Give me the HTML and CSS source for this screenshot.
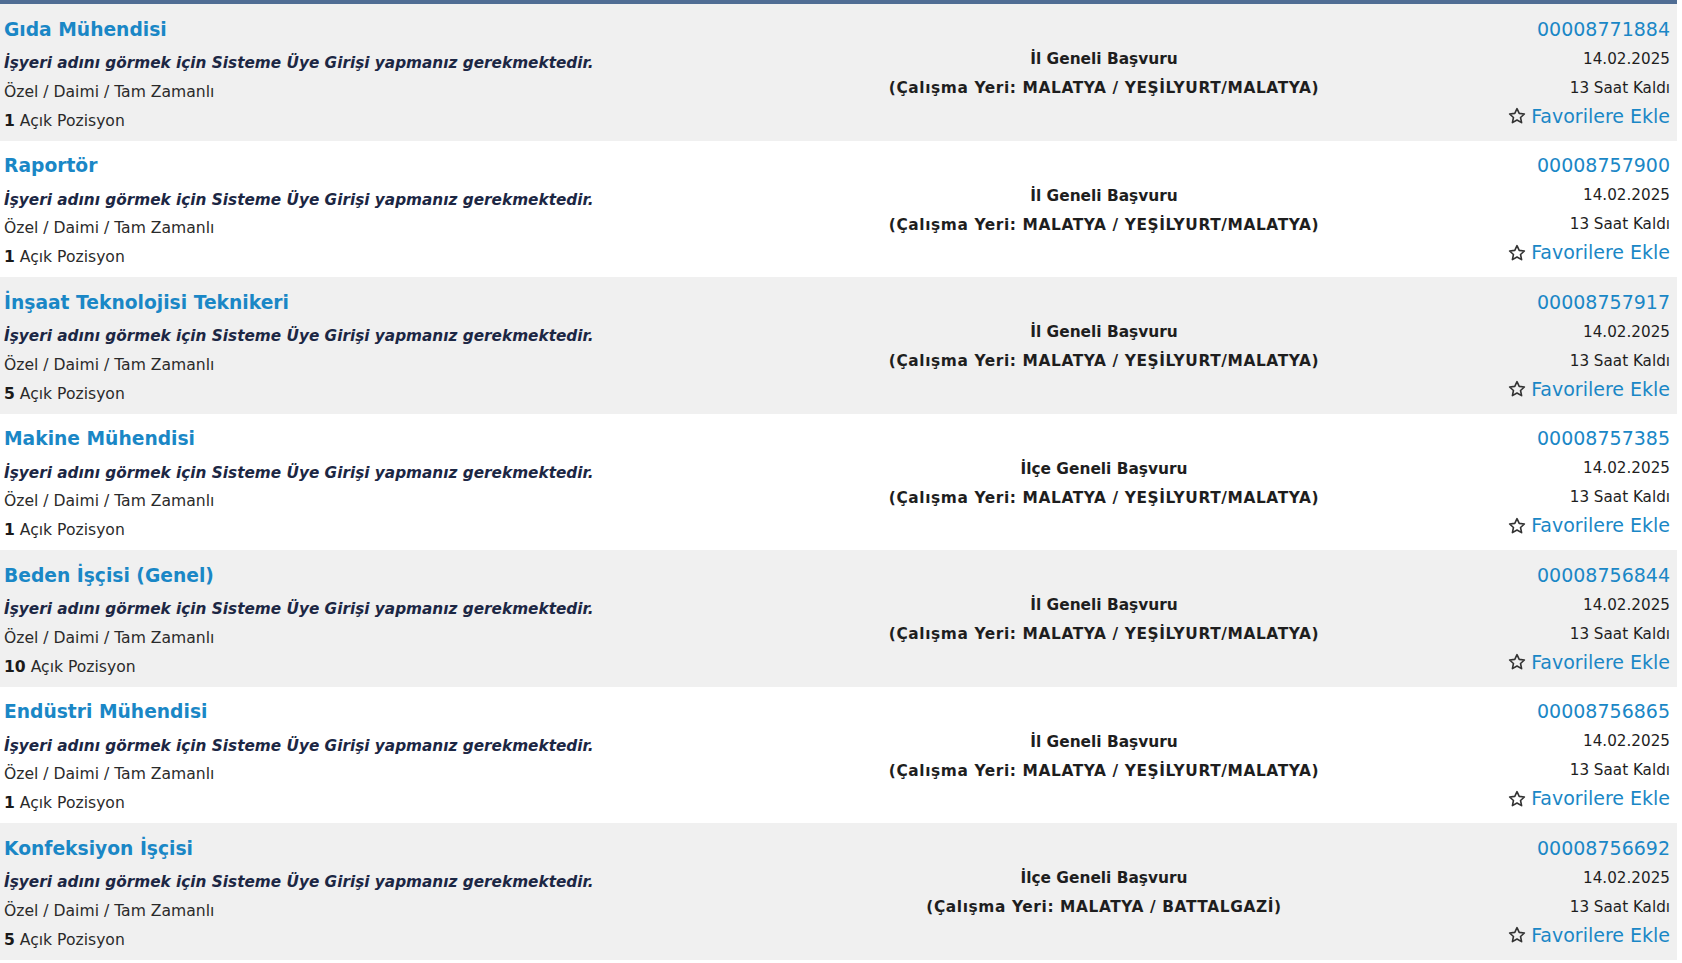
FILE: index.html
```html
<!DOCTYPE html>
<html lang="tr">
<head>
<meta charset="utf-8">
<title>İlanlar</title>
<link rel="stylesheet" href="styles.css">
</head>
<body>
<div class="list">
  <div class="row odd">
    <div class="col-left">
      <a class="title">Gıda Mühendisi</a>
      <div class="firm">İşyeri adını görmek için Sisteme Üye Girişi yapmanız gerekmektedir.</div>
      <div class="type">Özel / Daimi / Tam Zamanlı</div>
      <div class="pos"><b>1</b> Açık Pozisyon</div>
    </div>
    <div class="col-mid">
      <div>İl Geneli Başvuru</div>
      <div class="place">(Çalışma Yeri: MALATYA / YEŞİLYURT/MALATYA)</div>
    </div>
    <div class="col-right">
      <a class="no">00008771884</a>
      <div class="date">14.02.2025</div>
      <div class="left">13 Saat Kaldı</div>
      <a class="fav"><svg class="star" viewBox="0 0 20 20"><path d="M10 1.8l2.45 5.3 5.75.65-4.28 3.93 1.18 5.68L10 14.5l-5.1 2.86 1.18-5.68L1.8 7.75l5.75-.65z"/></svg>Favorilere Ekle</a>
    </div>
  </div>
  <div class="row even">
    <div class="col-left">
      <a class="title">Raportör</a>
      <div class="firm">İşyeri adını görmek için Sisteme Üye Girişi yapmanız gerekmektedir.</div>
      <div class="type">Özel / Daimi / Tam Zamanlı</div>
      <div class="pos"><b>1</b> Açık Pozisyon</div>
    </div>
    <div class="col-mid">
      <div>İl Geneli Başvuru</div>
      <div class="place">(Çalışma Yeri: MALATYA / YEŞİLYURT/MALATYA)</div>
    </div>
    <div class="col-right">
      <a class="no">00008757900</a>
      <div class="date">14.02.2025</div>
      <div class="left">13 Saat Kaldı</div>
      <a class="fav"><svg class="star" viewBox="0 0 20 20"><path d="M10 1.8l2.45 5.3 5.75.65-4.28 3.93 1.18 5.68L10 14.5l-5.1 2.86 1.18-5.68L1.8 7.75l5.75-.65z"/></svg>Favorilere Ekle</a>
    </div>
  </div>
  <div class="row odd">
    <div class="col-left">
      <a class="title">İnşaat Teknolojisi Teknikeri</a>
      <div class="firm">İşyeri adını görmek için Sisteme Üye Girişi yapmanız gerekmektedir.</div>
      <div class="type">Özel / Daimi / Tam Zamanlı</div>
      <div class="pos"><b>5</b> Açık Pozisyon</div>
    </div>
    <div class="col-mid">
      <div>İl Geneli Başvuru</div>
      <div class="place">(Çalışma Yeri: MALATYA / YEŞİLYURT/MALATYA)</div>
    </div>
    <div class="col-right">
      <a class="no">00008757917</a>
      <div class="date">14.02.2025</div>
      <div class="left">13 Saat Kaldı</div>
      <a class="fav"><svg class="star" viewBox="0 0 20 20"><path d="M10 1.8l2.45 5.3 5.75.65-4.28 3.93 1.18 5.68L10 14.5l-5.1 2.86 1.18-5.68L1.8 7.75l5.75-.65z"/></svg>Favorilere Ekle</a>
    </div>
  </div>
  <div class="row even">
    <div class="col-left">
      <a class="title">Makine Mühendisi</a>
      <div class="firm">İşyeri adını görmek için Sisteme Üye Girişi yapmanız gerekmektedir.</div>
      <div class="type">Özel / Daimi / Tam Zamanlı</div>
      <div class="pos"><b>1</b> Açık Pozisyon</div>
    </div>
    <div class="col-mid">
      <div>İlçe Geneli Başvuru</div>
      <div class="place">(Çalışma Yeri: MALATYA / YEŞİLYURT/MALATYA)</div>
    </div>
    <div class="col-right">
      <a class="no">00008757385</a>
      <div class="date">14.02.2025</div>
      <div class="left">13 Saat Kaldı</div>
      <a class="fav"><svg class="star" viewBox="0 0 20 20"><path d="M10 1.8l2.45 5.3 5.75.65-4.28 3.93 1.18 5.68L10 14.5l-5.1 2.86 1.18-5.68L1.8 7.75l5.75-.65z"/></svg>Favorilere Ekle</a>
    </div>
  </div>
  <div class="row odd">
    <div class="col-left">
      <a class="title">Beden İşçisi (Genel)</a>
      <div class="firm">İşyeri adını görmek için Sisteme Üye Girişi yapmanız gerekmektedir.</div>
      <div class="type">Özel / Daimi / Tam Zamanlı</div>
      <div class="pos"><b>10</b> Açık Pozisyon</div>
    </div>
    <div class="col-mid">
      <div>İl Geneli Başvuru</div>
      <div class="place">(Çalışma Yeri: MALATYA / YEŞİLYURT/MALATYA)</div>
    </div>
    <div class="col-right">
      <a class="no">00008756844</a>
      <div class="date">14.02.2025</div>
      <div class="left">13 Saat Kaldı</div>
      <a class="fav"><svg class="star" viewBox="0 0 20 20"><path d="M10 1.8l2.45 5.3 5.75.65-4.28 3.93 1.18 5.68L10 14.5l-5.1 2.86 1.18-5.68L1.8 7.75l5.75-.65z"/></svg>Favorilere Ekle</a>
    </div>
  </div>
  <div class="row even">
    <div class="col-left">
      <a class="title">Endüstri Mühendisi</a>
      <div class="firm">İşyeri adını görmek için Sisteme Üye Girişi yapmanız gerekmektedir.</div>
      <div class="type">Özel / Daimi / Tam Zamanlı</div>
      <div class="pos"><b>1</b> Açık Pozisyon</div>
    </div>
    <div class="col-mid">
      <div>İl Geneli Başvuru</div>
      <div class="place">(Çalışma Yeri: MALATYA / YEŞİLYURT/MALATYA)</div>
    </div>
    <div class="col-right">
      <a class="no">00008756865</a>
      <div class="date">14.02.2025</div>
      <div class="left">13 Saat Kaldı</div>
      <a class="fav"><svg class="star" viewBox="0 0 20 20"><path d="M10 1.8l2.45 5.3 5.75.65-4.28 3.93 1.18 5.68L10 14.5l-5.1 2.86 1.18-5.68L1.8 7.75l5.75-.65z"/></svg>Favorilere Ekle</a>
    </div>
  </div>
  <div class="row odd">
    <div class="col-left">
      <a class="title">Konfeksiyon İşçisi</a>
      <div class="firm">İşyeri adını görmek için Sisteme Üye Girişi yapmanız gerekmektedir.</div>
      <div class="type">Özel / Daimi / Tam Zamanlı</div>
      <div class="pos"><b>5</b> Açık Pozisyon</div>
    </div>
    <div class="col-mid">
      <div>İlçe Geneli Başvuru</div>
      <div class="place">(Çalışma Yeri: MALATYA / BATTALGAZİ)</div>
    </div>
    <div class="col-right">
      <a class="no">00008756692</a>
      <div class="date">14.02.2025</div>
      <div class="left">13 Saat Kaldı</div>
      <a class="fav"><svg class="star" viewBox="0 0 20 20"><path d="M10 1.8l2.45 5.3 5.75.65-4.28 3.93 1.18 5.68L10 14.5l-5.1 2.86 1.18-5.68L1.8 7.75l5.75-.65z"/></svg>Favorilere Ekle</a>
    </div>
  </div>
</div>
</body>
</html>
```
FILE: styles.css
```css
html, body {
  margin: 0;
  padding: 0;
  background: #ffffff;
}
body {
  font-family: "DejaVu Sans", Verdana, sans-serif;
  color: #222;
  overflow: hidden;
}
.list {
  width: 1677px;
  border-top: 4px solid #506d94;
}
.row {
  display: grid;
  grid-template-columns: 800px 608px 1fr;
  height: 136.5px;
  box-sizing: border-box;
}
.row.odd { background: #f0f0f0; }
.row.even { background: #ffffff; }
.col-left {
  padding: 10.5px 0 0 4px;
  display: flex;
  flex-direction: column;
  white-space: nowrap;
}
.title {
  font-size: 18.7px;
  font-weight: bold;
  color: #1a87c6;
  line-height: 30px;
  margin-bottom: 4.5px;
}
.firm {
  font-size: 15.3px;
  font-weight: bold;
  font-style: italic;
  color: #1c2744;
  line-height: 29px;
}
.type, .pos {
  font-size: 15.6px;
  color: #2a2a2a;
  line-height: 29px;
}
.type { margin-top: -0.5px; }
.pos b { color: #1a1a1a; }
.col-mid {
  align-self: center;
  margin-top: 4px;
  text-align: center;
  font-size: 15.4px;
  font-weight: bold;
  color: #1e1e1e;
  line-height: 29px;
  white-space: nowrap;
}
.place {
  letter-spacing: 0.6px;
}
.col-right {
  padding: 10.5px 7px 0 0;
  display: flex;
  flex-direction: column;
  align-items: flex-end;
  line-height: 29px;
  white-space: nowrap;
}
.no {
  font-size: 19px;
  color: #1a87c6;
}
.date, .left {
  font-size: 15.2px;
  color: #1e1e1e;
}
.date { margin-top: 1px; }
.fav {
  font-size: 19px;
  color: #1a87c6;
  display: flex;
  align-items: center;
  margin-top: -1px;
}
.star {
  width: 18px;
  height: 18px;
  margin-right: 5px;
  fill: none;
  stroke: #333333;
  stroke-width: 1.8;
  stroke-linejoin: round;
}
```
